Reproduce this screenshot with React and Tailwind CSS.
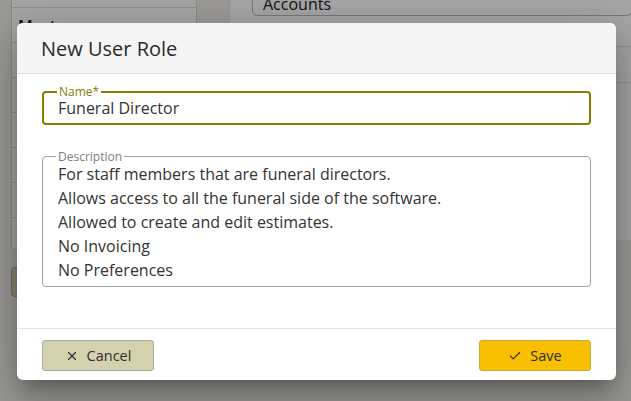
import { X, Check } from 'lucide-react'

const sideRows = ['Masters', 'Staff', 'Roles', 'Suppliers', 'Products', 'Templates']

export default function App() {
  return (
    <div className="relative w-[631px] h-[401px] overflow-hidden bg-[#f0efe9] font-['Open_Sans',sans-serif] text-[#333]">
      {/* page behind the dialog */}
      <div className="flex h-full">
        <div className="w-[11px] shrink-0" />
        <div className="w-[186px] shrink-0 flex flex-col">
          <div className="h-[250px] bg-white border border-[#d6d6d6] border-t-0 rounded-b-[4px] overflow-hidden">
            <div className="h-[8px] border-b border-[#dcdcdc]" />
            {sideRows.map(r => (
              <div key={r} className="h-[35px] px-[6px] pt-[6px] border-b border-[#dcdcdc] text-[16px] font-semibold text-[#222]">{r}</div>
            ))}
          </div>
          <div className="mt-[17px] h-[30px] w-[120px] bg-[#d4d1ad] border border-[#a9ab9f] rounded-[4px]" />
        </div>
        <div className="w-[32px] shrink-0" />
        <div className="flex-1 h-[240px] bg-white border-l border-[#e0e0e0]">
          <div className="h-[16px] pl-[22px]">
            <div className="h-[16px] w-[380px] border border-t-0 border-[#b8b8b8] rounded-b-[5px] px-[10px] text-[16px] leading-[18px] text-[#222] overflow-hidden">
              <div className="-mt-[5px]">Accounts</div>
            </div>
          </div>
          <div className="h-[31px] border-b border-[#e4e4e4]" />
          <div className="h-[36px] border-b border-[#e4e4e4]" />
        </div>
      </div>

      <div className="absolute inset-0 bg-black/35" />

      {/* dialog */}
      <div className="absolute left-[17px] top-[23px] w-[599px] h-[357px] bg-white rounded-[6px] overflow-hidden flex flex-col shadow-[0_11px_15px_-7px_rgba(0,0,0,0.25),0_24px_38px_3px_rgba(0,0,0,0.16),0_9px_46px_8px_rgba(0,0,0,0.14)]">
        <div className="h-[51px] shrink-0 bg-[#f5f5f5] border-b border-[#dddddd] px-[24px] flex items-center">
          <h2 className="text-[20px] font-medium text-[#2a2a2a] leading-none pt-[1px]">New User Role</h2>
        </div>

        <div className="flex-1 px-[25px] pt-[17px]">
          <div className="relative h-[34px] border-2 border-[#877e00] rounded-[4px] flex items-center px-[14px]">
            <span className="absolute left-[13px] -top-[8px] bg-white px-[2px] text-[12px] leading-[14px] text-[#877e00]">Name*</span>
            <span className="text-[16px] leading-[20px] text-[#333]">Funeral Director</span>
          </div>

          <div className="relative mt-[31px] h-[131px] border border-[#a3a3a3] rounded-[4px] px-[15px] pt-[5px]">
            <span className="absolute left-[13px] -top-[7px] bg-white px-[2px] text-[12px] leading-[14px] text-[#7d7d7d]">Description</span>
            <div className="text-[16px] leading-[24px] text-[#333]">
              <div>For staff members that are funeral directors.</div>
              <div>Allows access to all the funeral side of the software.</div>
              <div>Allowed to create and edit estimates.</div>
              <div>No Invoicing</div>
              <div>No Preferences</div>
            </div>
          </div>
        </div>

        <div className="h-[52px] shrink-0 border-t border-[#e3e3e3] px-[25px] pt-[11px] flex justify-between items-start">
          <button className="w-[112px] h-[31px] flex items-center justify-center gap-[8px] bg-[#d4d1ae] border border-[#a9ab9f] rounded-[3px] text-[14.5px] font-medium text-[#2e2e2e]">
            <X size={14} strokeWidth={2} /> Cancel
          </button>
          <button className="w-[112px] h-[31px] flex items-center justify-center gap-[8px] bg-[#f8c000] border border-[#c9a73a] rounded-[3px] text-[14.5px] font-medium text-[#2e2e2e]">
            <Check size={14} strokeWidth={2} /> Save
          </button>
        </div>
      </div>
    </div>
  )
}
